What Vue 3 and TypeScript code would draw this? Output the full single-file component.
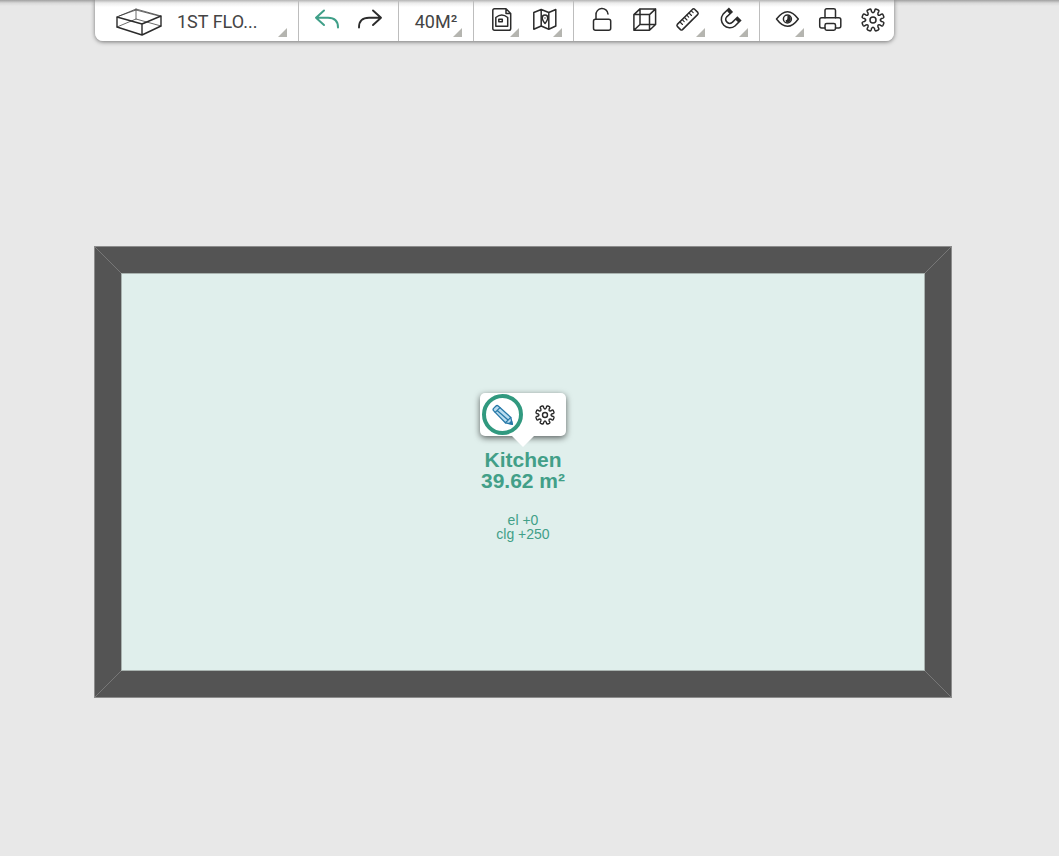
<script setup lang="ts">
import { ref } from 'vue'

interface Tool {
  id: string
  label: string
  menu?: boolean
}

const history: Tool[] = [
  { id: 'undo', label: 'Undo' },
  { id: 'redo', label: 'Redo' },
]

const groups: Tool[][] = [
  [
    { id: 'plan', label: 'Floor plan file', menu: true },
    { id: 'map', label: 'Site map', menu: true },
  ],
  [
    { id: 'lock', label: 'Unlock' },
    { id: 'cube', label: '3D view' },
    { id: 'ruler', label: 'Measure', menu: true },
    { id: 'magnet', label: 'Snapping', menu: true },
  ],
  [
    { id: 'eye', label: 'Visibility', menu: true },
    { id: 'print', label: 'Print' },
    { id: 'gear', label: 'Settings' },
  ],
]

const editing = ref(true)

// Outline of an eight-toothed cog centred on (12, 12)
function cogPath(): string {
  const at = (r: number, deg: number): string => {
    const a = (deg * Math.PI) / 180
    return `${(12 + r * Math.sin(a)).toFixed(2)} ${(12 - r * Math.cos(a)).toFixed(2)}`
  }
  let d = `M${at(8.8, 10)}`
  for (let i = 0; i < 8; i++) {
    const t = 22.5 + i * 45
    d += `L${at(10.2, t - 12)}Q${at(11.4, t - 11)} ${at(11.3, t - 5)}L${at(11.3, t + 5)}`
    d += `Q${at(11.4, t + 11)} ${at(10.2, t + 12)}L${at(8.8, t + 12.5)}`
    d += `Q${at(5.8, t + 22.5)} ${at(8.8, t + 32.5)}`
  }
  return d + 'Z'
}

const cog = cogPath()
</script>

<template>
  <main class="editor">
    <nav class="toolbar" aria-label="Plan tools">
      <div class="group">
        <button class="floor" type="button">
          <svg class="floor-icon" viewBox="0 0 46 28" aria-hidden="true">
            <path class="thin" d="M1 19 20 11 45 18M20 1V11M3 8 20 2 43 8" />
            <path d="M1 9 20 1 45 8" class="thin" />
            <path class="bold" d="M1 9 26 16 45 8V18L26 27 1 19ZM26 16V27" />
          </svg>
          <span>1ST FLO...</span>
          <i class="corner"></i>
        </button>
      </div>

      <div class="group tools">
        <button v-for="t in history" :key="t.id" class="tool" :class="t.id" type="button" :aria-label="t.label">
          <svg class="icon" viewBox="0 0 24 24" aria-hidden="true">
            <path v-if="t.id === 'undo'" d="M9 2.5 1 9.7 9 17M1.5 9.7H13Q23 9.7 23 19.5" />
            <path v-else d="M15 2.5 23 9.7 15 17M22.5 9.7H11Q1 9.7 1 19.5" />
          </svg>
        </button>
      </div>

      <div class="group">
        <button class="area" type="button">
          <span>40M²</span>
          <i class="corner"></i>
        </button>
      </div>

      <div v-for="(group, g) in groups" :key="g" class="group tools">
        <button v-for="t in group" :key="t.id" class="tool" type="button" :aria-label="t.label">
          <svg class="icon" viewBox="0 0 24 24" aria-hidden="true">
            <template v-if="t.id === 'plan'">
              <path d="M4.5.8H16L20.7 5.5V20.5Q20.7 22.3 19 22.3H4.5Q2.8 22.3 2.8 20.5V2.5Q2.8.8 4.5.8ZM16 .8V5.5H20.7" />
              <path d="M5.8 9.5Q11.8 4.5 17.7 9.5V18.3H5.8Z" />
              <path d="M8.8 11.3H12.3V13.7H8.8Z" />
            </template>
            <template v-else-if="t.id === 'map'">
              <path d="M.8 4.5 8.2 1.5 15.8 4.5 22.8 1.5V18L15.8 21.3 8.2 18 .8 21.3ZM8.2 1.5V18M15.8 4.5V21.3" />
              <path d="M12 15.5Q9 11.5 9.3 9.8A2.7 2.7 0 0 1 14.7 9.8Q15 11.5 12 15.5Z" />
              <circle class="solid" cx="12" cy="10" r=".7" />
            </template>
            <template v-else-if="t.id === 'lock'">
              <rect x="3.5" y="11.2" width="17.2" height="11" rx="2" />
              <path d="M6 11V7A6 6 0 0 1 18 6" />
            </template>
            <template v-else-if="t.id === 'cube'">
              <path d="M.9 6.6H16.5V22.2H.9ZM7 .9H22.6V16.5H7ZM.9 6.6 7 .9M16.5 6.6 22.6.9M.9 22.2 7 16.5M16.5 22.2 22.6 16.5" />
            </template>
            <template v-else-if="t.id === 'ruler'">
              <path d="M1.3 16.4 16.6 1.2Q17.6.4 18.6 1.2L21.8 4.4Q22.6 5.4 21.8 6.4L6.5 21.6Q5.5 22.4 4.5 21.6L1.3 18.4Q.5 17.4 1.3 16.4Z" />
              <path class="fine" d="M4 14 6.5 16.5M6.3 11.7 8.2 13.6M8.5 9.5 11 12M10.8 7.2 12.7 9.1M13 5 15.5 7.5M15.3 2.8 17.2 4.7" />
            </template>
            <template v-else-if="t.id === 'magnet'">
              <path class="magnet-edge" d="M12 1.8 5.9 7.5A6.2 6.2 0 0 0 14.6 16.2L20.5 10.3" />
              <path class="magnet-fill" d="M9.2 4.4 5.9 7.5A6.2 6.2 0 0 0 14.6 16.2L17.8 13" />
            </template>
            <template v-else-if="t.id === 'eye'">
              <path d="M1.5 11Q7 3.7 12.5 3.7T23.3 11Q18 18.3 12.5 18.3T1.5 11Z" />
              <circle cx="12.4" cy="11" r="4" />
              <path class="solid" d="M12.4 7.6A3.4 3.4 0 0 1 12.4 14.4 2 2 0 0 1 10.6 12.2Q12.4 12 12.4 10.2Z" />
            </template>
            <template v-else-if="t.id === 'print'">
              <path d="M7 9.8V2.5Q7 .8 8.7.8H15.8Q17.5.8 17.5 2.5V9.8" />
              <path d="M7 20H3.7Q1.7 20 1.7 18V11.8Q1.7 9.8 3.7 9.8H20.8Q22.8 9.8 22.8 11.8V18Q22.8 20 20.8 20H17.5" />
              <rect x="7" y="15.5" width="10.5" height="6.8" rx="1.7" />
            </template>
            <template v-else>
              <path :d="cog" />
              <circle cx="12" cy="12" r="3" />
            </template>
          </svg>
          <i v-if="t.menu" class="corner"></i>
        </button>
      </div>
    </nav>

    <section class="room" aria-label="Kitchen">
      <div class="floor-area">
        <div class="popup">
          <button class="popup-button" :class="{ active: editing }" type="button" aria-label="Edit room" @click="editing = !editing">
            <svg class="pencil" viewBox="0 0 20 20" aria-hidden="true">
              <path class="pencil-body" d="M.5 5.6Q-.4 4.4.6 3.4L3 1Q4 0 5.2.9L17.8 12.4 19.2 19.2 12.4 17.8Z" />
              <path d="M2.2 7.4 7 2.6M4.2 5.4 15.1 15.1M12.4 17.8 15.1 15.1 17.8 12.4" />
              <path class="pencil-tip" d="M19.4 19.4 16.2 18.6 18.6 16.2Z" />
            </svg>
          </button>
          <button class="popup-button" type="button" aria-label="Room settings">
            <svg class="popup-cog" viewBox="0 0 24 24" aria-hidden="true">
              <path :d="cog" />
              <circle cx="12" cy="12" r="3" />
            </svg>
          </button>
        </div>
        <h1 class="name">Kitchen<br />39.62 m²</h1>
        <p class="levels">el +0<br />clg +250</p>
      </div>
    </section>
  </main>
</template>

<style>
body {
  margin: 0;
  background: #e8e8e8;
}
</style>

<style scoped>
.editor {
  box-sizing: border-box;
  display: flex;
  flex-direction: column;
  min-height: 100vh;
  padding: 0 107px 158px 94px;
  background: linear-gradient(#a0a0a0, #d8d8d8 3px, #e8e8e8 6px);
  font-family: Roboto, "Liberation Sans", sans-serif;
}

button {
  margin: 0;
  padding: 0;
  border: 0;
  background: none;
  color: inherit;
  font: inherit;
  cursor: pointer;
}

.toolbar {
  display: flex;
  align-self: flex-start;
  height: 41px;
  margin-left: 1px;
  border-radius: 0 0 8px 8px;
  background: linear-gradient(#b4b4b4, #ececec 3px, #fff 7px);
  box-shadow: 0 1px 4px rgba(0, 0, 0, 0.5);
  color: #444;
  font-size: 18px;
}

.group {
  display: flex;
  border-right: 1px solid #bdbdbd;
}

.group:last-child {
  border-right: 0;
}

.tools {
  padding: 0 7px 0 6px;
}

.group:last-child.tools {
  padding: 0 0 0 5px;
}

.floor,
.area,
.tool {
  position: relative;
  display: flex;
}

.floor {
  align-items: center;
  gap: 15px;
  width: 203px;
  padding: 2px 0 0 21px;
}

.area {
  align-items: center;
  justify-content: center;
  width: 74px;
  padding-top: 1px;
}

.tool {
  justify-content: center;
  width: 43px;
  padding-top: 8px;
}

.corner {
  position: absolute;
  right: 4px;
  bottom: 4px;
  width: 9px;
  height: 9px;
  background: #b5b5b0;
  clip-path: polygon(100% 0, 100% 100%, 0 100%);
}

.floor .corner,
.area .corner {
  right: 11px;
}

svg {
  display: block;
  flex: none;
  overflow: visible;
  fill: none;
  stroke: #2b2b2b;
  stroke-width: 1.5;
  stroke-linecap: round;
  stroke-linejoin: round;
}

.icon {
  width: 24px;
  height: 24px;
}

.floor-icon {
  width: 46px;
  height: 28px;
}

.thin {
  stroke-width: 0.7;
}

.bold {
  stroke-width: 1.4;
}

.fine {
  stroke-width: 1.1;
}

.solid {
  fill: #2b2b2b;
  stroke: none;
}

.undo svg {
  stroke: #3f9f88;
  stroke-width: 2;
}

.redo svg {
  stroke-width: 1.9;
}

.magnet-edge {
  stroke-width: 6;
  stroke-linecap: butt;
}

.magnet-fill {
  stroke: #fff;
  stroke-width: 3;
  stroke-linecap: butt;
}

.room {
  box-sizing: border-box;
  display: flex;
  flex: 1;
  margin-top: 205px;
  padding: 26px;
  border: 1px solid #8c8c8c;
  background:
    linear-gradient(to top right, transparent 49%, #777 49%, #777 51%, transparent 51%) left top / 27px 27px no-repeat,
    linear-gradient(to top left, transparent 49%, #777 49%, #777 51%, transparent 51%) right top / 27px 27px no-repeat,
    linear-gradient(to top left, transparent 49%, #777 49%, #777 51%, transparent 51%) left bottom / 27px 27px no-repeat,
    linear-gradient(to top right, transparent 49%, #777 49%, #777 51%, transparent 51%) right bottom / 27px 27px no-repeat,
    #545454;
}

.floor-area {
  box-sizing: border-box;
  display: flex;
  flex: 1;
  flex-direction: column;
  align-items: center;
  justify-content: center;
  padding-bottom: 10px;
  border: 1px solid #a9b3b0;
  background: #e0efec;
  color: #429f88;
  font-family: "Liberation Sans", Arial, sans-serif;
  text-align: center;
}

.popup {
  box-sizing: border-box;
  position: relative;
  display: flex;
  gap: 1px;
  width: 86px;
  padding: 1px 1px 1px 2px;
  border-radius: 5px;
  background: #fff;
  box-shadow: 0 2px 6px rgba(0, 0, 0, 0.6);
}

.popup::after {
  content: "";
  position: absolute;
  top: 100%;
  left: 50%;
  width: 22px;
  height: 11px;
  margin-left: -11px;
  background: #fff;
  clip-path: polygon(0 0, 100% 0, 50% 100%);
}

.popup-button {
  box-sizing: border-box;
  display: flex;
  align-items: center;
  justify-content: center;
  width: 41px;
  height: 41px;
  border-radius: 50%;
}

.active {
  border: 4px solid #31997f;
}

.pencil {
  width: 20px;
  height: 20px;
  stroke: #2779a8;
  stroke-width: 1.3;
}

.pencil-body {
  fill: #b9dcf0;
}

.pencil-tip {
  fill: #2779a8;
}

.popup-cog {
  width: 20px;
  height: 20px;
  stroke-width: 1.7;
}

.name {
  margin: 13px 0 0;
  font-size: 21px;
  font-weight: 700;
  line-height: 21px;
}

.levels {
  margin: 22px 0 0;
  font-size: 14px;
  line-height: 14px;
}
</style>
